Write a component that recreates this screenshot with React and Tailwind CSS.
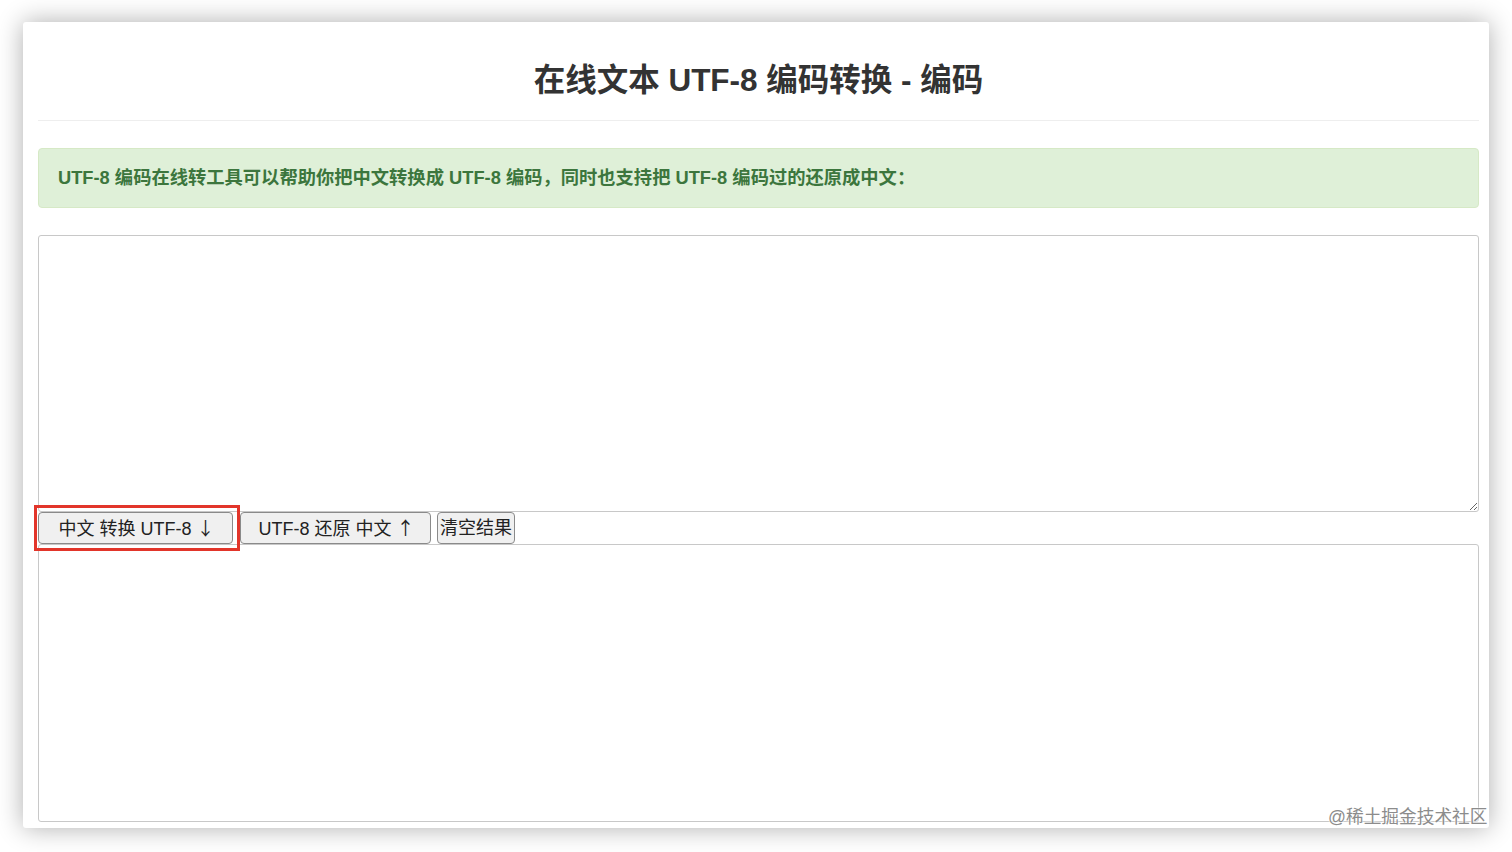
export default function App() {
  const btn =
    'h-[32px] rounded-[4px] border border-[#8a8a8a] bg-[#f0f0f0] text-[18px] leading-none text-[#222]'

  return (
    <div className="relative min-h-screen bg-white px-[23px] pt-[22px] font-['Liberation_Sans','Noto_Sans_CJK_SC',sans-serif] text-[#333]">
      <div className="h-[806px] rounded-[3px] bg-white pl-[15px] pr-[10px] pt-[37px] shadow-[0_0_26px_rgba(0,0,0,0.32)]">
        <h1 className="text-center text-[31.5px] font-bold leading-[42px] text-[#333]">
          在线文本 UTF-8 编码转换 - 编码
        </h1>
        <div className="mt-[19px] border-t border-[#eeeeee]" />

        <div className="mt-[27px] flex h-[60px] items-center rounded-[4px] border border-[#d6e9c6] bg-[#dff0d8] px-[19px] text-[18.3px] font-bold text-[#3c763d]">
          UTF-8 编码在线转工具可以帮助你把中文转换成 UTF-8 编码，同时也支持把 UTF-8 编码过的还原成中文：
        </div>

        <textarea className="mt-[27px] block h-[277px] w-full rounded-[3px] border border-[#c8c8c8] bg-white outline-none" />

        <div className="flex h-[32px] items-stretch">
          <div className="relative">
            <button type="button" className={`${btn} w-[195px] pl-[2px]`}>
              中文 转换 UTF-8 <span className="font-['Noto_Sans_CJK_SC',sans-serif]">↓</span>
            </button>
            <div className="pointer-events-none absolute -left-[4px] -top-[7px] h-[46px] w-[206px] border-[3px] border-[#e2352a]" />
          </div>
          <button type="button" className={`${btn} ml-[7px] w-[191px] pl-[2px]`}>
            UTF-8 还原 中文 <span className="font-['Noto_Sans_CJK_SC',sans-serif]">↑</span>
          </button>
          <button type="button" className={`${btn} ml-[6px] w-[78px]`}>
            清空结果
          </button>
        </div>

        <textarea className="block h-[278px] w-full resize-none rounded-[3px] border border-[#c8c8c8] bg-white outline-none" />
      </div>

      <div className="absolute left-[1328px] top-[805px] text-[17.7px] leading-[24px] text-[#8c8c8c] [text-shadow:0_0_2px_#fff,0_0_2px_#fff]">
        @稀土掘金技术社区
      </div>
    </div>
  )
}
